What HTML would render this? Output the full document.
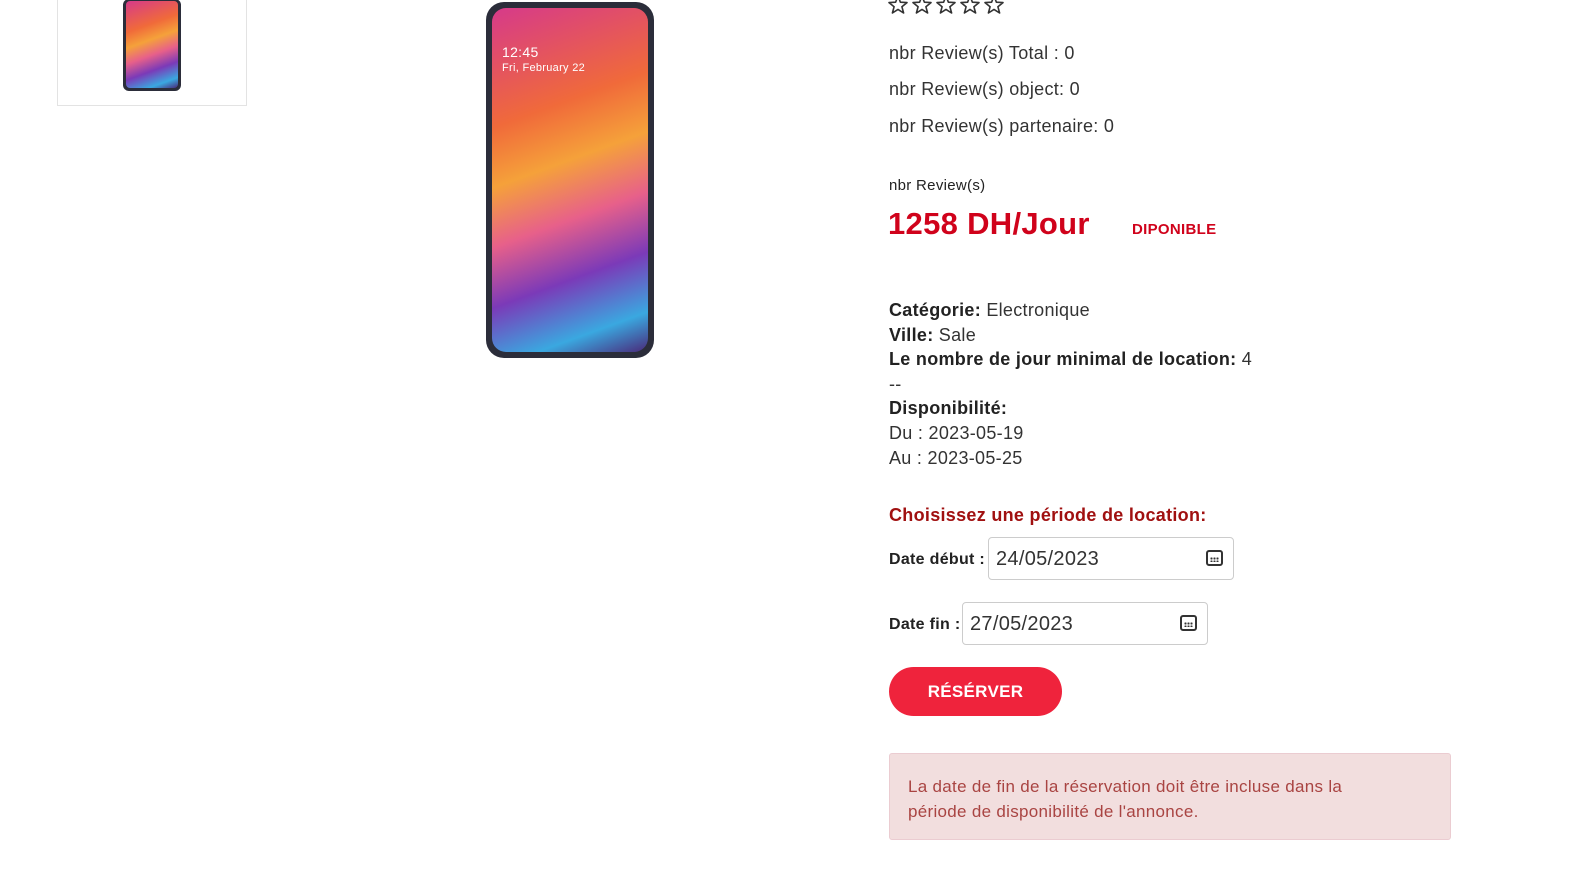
<!DOCTYPE html>
<html><head><meta charset="utf-8"><style>
body{margin:0;width:1595px;height:883px;background:#fff;font-family:"Liberation Sans",sans-serif;color:#333;position:relative;overflow:hidden;letter-spacing:0.3px}
.a{position:absolute;white-space:nowrap}
.thumb{position:absolute;left:57px;top:-2px;width:190px;height:108px;border:1px solid #e3e3e3;box-sizing:border-box}
.phone{position:absolute;border-radius:14px;background:#2b2d3a;overflow:hidden}
.scr{position:absolute;background:linear-gradient(160deg,#d63a8a 0%,#f06a3a 30%,#f5a13a 45%,#e7608a 60%,#7b3ab8 75%,#3aa8e0 90%,#4a2a7a 100%)}
.lbl{font-weight:bold;font-size:16px;color:#222}
.inp{position:absolute;border:1px solid #ccc;border-radius:4px;height:43px;box-sizing:border-box;font-size:20px;color:#333;padding:10px 7px;width:246px}
.cal{position:absolute;right:10px;top:12px;width:17px;height:16px;border:2px solid #333;border-radius:3px;box-sizing:border-box}
.cal:after{content:"";position:absolute;left:2px;top:5px;width:9px;height:5px;background:radial-gradient(circle,#333 1px,transparent 1.2px) 0 0/3px 3px}
</style></head><body>
<div class="thumb"><div class="phone" style="left:65px;top:0;width:58px;height:92px;border-radius:6px"><div class="scr" style="left:3px;top:2px;right:3px;bottom:3px;border-radius:4px"></div></div></div>
<div class="phone" style="left:486px;top:2px;width:168px;height:356px;border-radius:18px"><div class="scr" style="left:6px;top:6px;right:6px;bottom:6px;border-radius:14px"></div>
<div class="a" style="left:16px;top:42px;color:#fff;font-size:14px">12:45</div><div class="a" style="left:16px;top:60px;color:#fff;font-size:11px">Fri, February 22</div></div>
<svg class="a" style="left:888px;top:-6px" width="120" height="20" viewBox="0 0 120 20">
<g fill="none" stroke="#333" stroke-width="1.6" stroke-linejoin="round">
<path id="s" d="M10 2 L12.4 8.2 L19 8.6 L13.9 12.7 L15.6 19 L10 15.4 L4.4 19 L6.1 12.7 L1 8.6 L7.6 8.2 Z"/>
<use href="#s" x="24"/><use href="#s" x="48"/><use href="#s" x="72"/><use href="#s" x="96"/></g></svg>
<div class="a" style="left:889px;top:43px;font-size:18px">nbr Review(s) Total : 0</div>
<div class="a" style="left:889px;top:79px;font-size:18px">nbr Review(s) object: 0</div>
<div class="a" style="left:889px;top:116px;font-size:18px">nbr Review(s) partenaire: 0</div>
<div class="a" style="left:889px;top:177px;font-size:15px;color:#222">nbr Review(s)</div>
<div class="a" style="left:888px;top:206px;font-size:31px;font-weight:bold;color:#d0021b">1258 DH/Jour</div>
<div class="a" style="left:1132px;top:221px;font-size:15px;font-weight:bold;color:#d0021b">DIPONIBLE</div>
<div class="a" style="left:889px;top:298px;font-size:18px;line-height:24.6px"><b style="color:#222">Catégorie:</b> Electronique<br><b style="color:#222">Ville:</b> Sale<br><b style="color:#222">Le nombre de jour minimal de location:</b> 4<br>--<br><b style="color:#222">Disponibilité:</b><br>Du : 2023-05-19<br>Au : 2023-05-25</div>
<div class="a" style="left:889px;top:505px;font-size:18px;font-weight:bold;color:#a01010">Choisissez une période de location:</div>
<div class="a lbl" style="left:889px;top:551px">Date début :</div>
<div class="inp" style="left:988px;top:537px">24/05/2023<div class="cal"></div></div>
<div class="a lbl" style="left:889px;top:616px">Date fin :</div>
<div class="inp" style="left:962px;top:602px">27/05/2023<div class="cal"></div></div>
<div class="a" style="left:889px;top:667px;width:173px;height:49px;border-radius:25px;background:#ef233c;color:#fff;font-weight:bold;font-size:17px;text-align:center;line-height:49px">RÉSÉRVER</div>
<div class="a" style="left:889px;top:753px;width:562px;height:87px;box-sizing:border-box;background:#f2dede;border:1px solid #ebccd1;border-radius:3px;color:#a94442;font-size:17px;padding:20px 60px 20px 18px;white-space:normal;line-height:25px">La date de fin de la réservation doit être incluse dans la période de disponibilité de l'annonce.</div>
</body></html>
